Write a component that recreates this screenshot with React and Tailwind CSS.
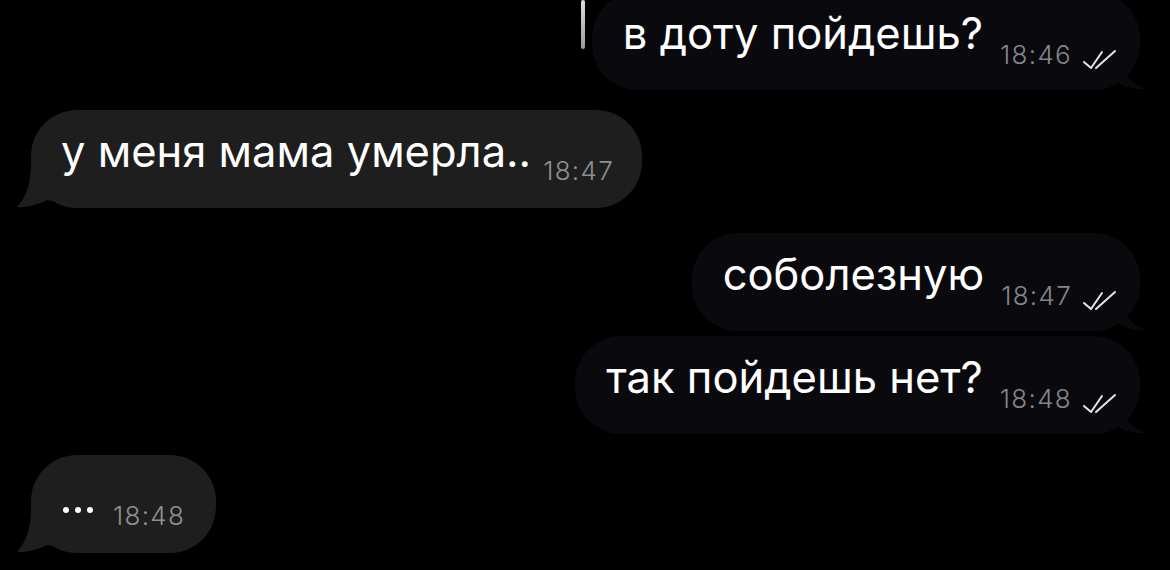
import React from "react";

const font = { fontFamily: "Inter, 'Noto Sans', sans-serif" };

function Ticks() {
  return (
    <svg width="36" height="22" viewBox="0 0 36 22" className="shrink-0 -mb-[3px]">
      <path d="M2 13 L9 19 L20 3" fill="none" stroke="#e6e6e6" strokeWidth="2" strokeLinecap="round" strokeLinejoin="round" />
      <path d="M14 19 L33 2" fill="none" stroke="#e6e6e6" strokeWidth="2" strokeLinecap="round" />
    </svg>
  );
}

function Time({ children, out }) {
  return (
    <span className={`text-[26px] leading-none tracking-[1.3px] font-light ${out ? "text-[#85858a]" : "text-[#8f8f8f]"}`}>
      {children}
    </span>
  );
}

function Outgoing({ text, time, className = "" }) {
  return (
    <div className={`relative self-end mr-[30px] h-[98px] rounded-[46px] bg-[#0a0a0e] flex items-end pb-[22px] pl-[31px] pr-[22px] ${className}`}>
      <span className="text-[43.5px] leading-none text-white mb-[13px]">{text}</span>
      <div className="flex items-end gap-[10px] ml-[17px]">
        <Time out>{time}</Time>
        <Ticks />
      </div>
      {/* tail */}
      <svg width="30" height="40" viewBox="0 0 30 40" className="absolute -right-[10px] bottom-0">
        <path d="M0 0 C2 22 10 34 26 39 C16 40 8 38 0 34 Z" fill="#0a0a0e" />
      </svg>
    </div>
  );
}

function Incoming({ children, time, gap = "ml-[12px]", className = "" }) {
  return (
    <div className={`relative self-start ml-[31px] h-[98px] rounded-[46px] bg-[#1e1e1e] flex items-end pb-[22px] pl-[30px] pr-[28px] ${className}`}>
      {children}
      <div className={gap}>
        <Time>{time}</Time>
      </div>
      {/* tail */}
      <svg width="40" height="46" viewBox="0 0 40 46" className="absolute -left-[14px] bottom-0">
        <path d="M14 0 C14 20 10 34 0 45 C10 46 22 42 30 38 L40 40 L40 0 Z" fill="#1e1e1e" />
      </svg>
    </div>
  );
}

export default function App() {
  return (
    <div className="relative w-[1170px] h-[570px] bg-black overflow-hidden" style={font}>
      {/* scroll indicator */}
      <div className="absolute left-[581px] top-0 w-[4px] h-[49px] rounded-full bg-gradient-to-b from-[#e0e0e0] to-[#9a9a9a]" />

      <div className="flex flex-col -mt-[8px]">
        <Outgoing text="в доту пойдешь?" time="18:46" />

        <Incoming time="18:47" className="mt-[20px]">
          <span className="text-[43.5px] leading-none text-white mb-[13px]">у меня мама умерла..</span>
        </Incoming>

        <Outgoing text="соболезную" time="18:47" className="mt-[25px]" />
        <Outgoing text="так пойдешь нет?" time="18:48" className="mt-[5px]" />

        <Incoming time="18:48" gap="ml-[20px]" className="mt-[21px] pr-[31px]">
          <span className="flex gap-[6px] mb-[18px] ml-[2px]">
            <span className="w-[6px] h-[6px] rounded-full bg-white" />
            <span className="w-[6px] h-[6px] rounded-full bg-white" />
            <span className="w-[6px] h-[6px] rounded-full bg-white" />
          </span>
        </Incoming>
      </div>
    </div>
  );
}
